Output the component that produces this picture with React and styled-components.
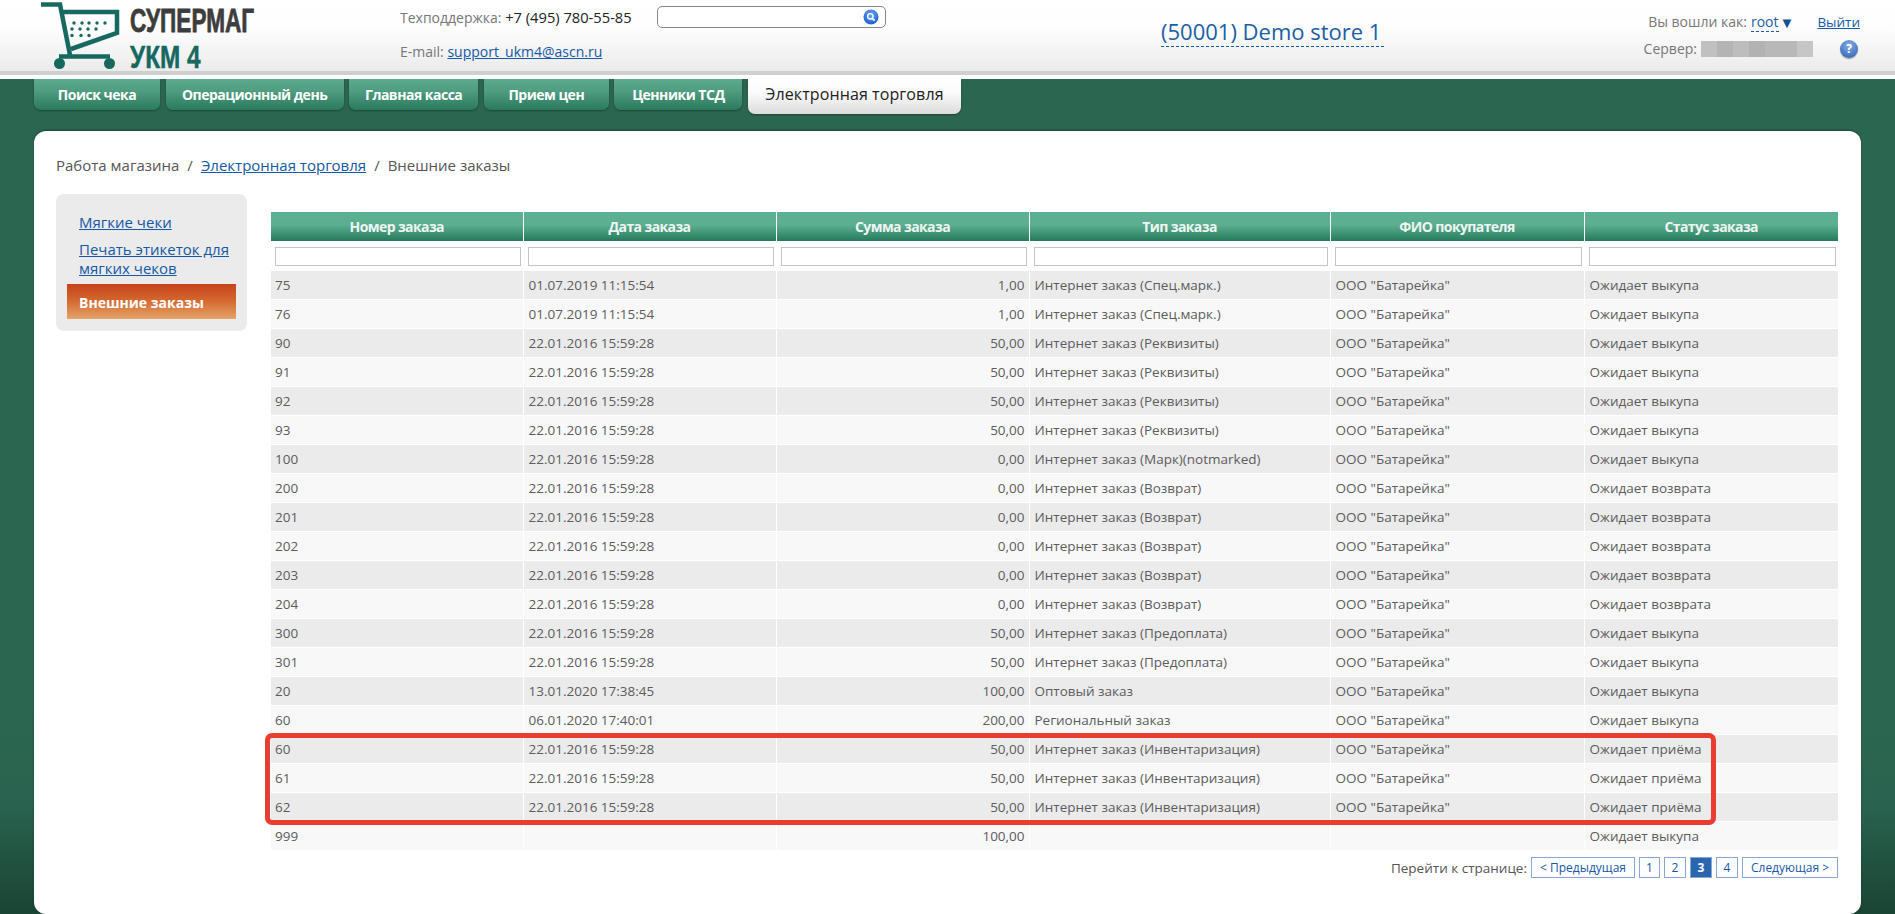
import React from "react";
import styled, { createGlobalStyle } from "styled-components";

const Global = createGlobalStyle`
  html, body { margin: 0; padding: 0; height: 100%; overflow: hidden; }
  body { font-family: "Open Sans", "Noto Sans", sans-serif; color: #555; }
  #root { height: 100%; }
`;
const Page = styled.div`
  height: 914px;
  display: flex;
  flex-direction: column;
  background: linear-gradient(to bottom, #2b6650 0, #2b6650 710px, #2a6450 800px, #1a4434 914px);
`;
const Header = styled.header`
  height: 71px;
  flex: none;
  display: flex;
  background: linear-gradient(to bottom, #ffffff 0, #fdfdfd 30px, #ebebeb 100%);
  border-bottom: 4px solid #cfcfcf;
  box-shadow: 0 4px 0 #fff;
  margin-bottom: 4px;
`;
const Logo = styled.div`
  width: 360px;
  margin-left: 40px;
  display: flex;
  flex: none;
`;
const LogoText = styled.div`
  width: 130px;
  padding-top: 8px;
  display: flex;
  flex-direction: column;
`;
const LogoTop = styled.div`
  font-family: "Liberation Sans", sans-serif;
  font-weight: 700;
  font-size: 33px;
  line-height: 26px;
  height: 26px;
  color: #3d3d3d;
  transform: scaleX(0.685);
  transform-origin: 0 50%;
  white-space: nowrap;
  -webkit-text-stroke: 0.8px #3d3d3d;
  width: 122px;
`;
const LogoBottom = styled.div`
  font-family: "Liberation Sans", sans-serif;
  font-weight: 700;
  font-size: 32px;
  line-height: 26px;
  height: 26px;
  margin-top: 10px;
  color: #17695f;
  transform: scaleX(0.76);
  transform-origin: 0 50%;
  white-space: nowrap;
  -webkit-text-stroke: 0.5px #17695f;
  width: 70px;
`;
const Contacts = styled.div`
  width: 257px;
  flex: none;
  padding-top: 7px;
  font-size: 14px;
  line-height: 20px;
  color: #777;
`;
const ContactLine = styled.div`
  height: 35px;
  white-space: nowrap;
`;
const Phone = styled.span`
  color: #222;
  font-size: 14.7px;
`;
const A = styled.a`
  color: #1458a6;
  text-decoration: underline;
  cursor: pointer;
`;
const Search = styled.div`
  width: 229px;
  height: 22px;
  box-sizing: border-box;
  margin-top: 6px;
  flex: none;
  border: 1px solid #888;
  border-radius: 5px;
  background: #fff;
  display: flex;
  align-items: center;
  justify-content: flex-end;
  padding-right: 6px;
`;
const Store = styled.div`
  margin-left: 275px;
  width: 223px;
  flex: none;
  height: 31px;
  margin-top: 16px;
  box-sizing: border-box;
  border-bottom: 1px dashed #1458a6;
  font-size: 22px;
  line-height: 31px;
  color: #1a5fa5;
  white-space: nowrap;
`;
const User = styled.div`
  flex: 1;
  padding: 12px 35px 0 0;
  font-size: 14px;
  line-height: 20px;
  color: #777;
`;
const UserRow = styled.div`
  display: flex;
  justify-content: flex-end;
  align-items: center;
  height: 20px;
  white-space: nowrap;
`;
const UserLink = styled.span`
  color: #1a5fa5;
  margin-left: 4px;
  border-bottom: 1px dashed #1458a6;
  line-height: 19px;
`;
const Caret = styled.span`
  color: #134f93;
  font-size: 15px;
  margin-left: 1px;
`;
const Logout = styled(A)`
  margin-left: 23px;
  font-size: 13.5px;
`;
const ServerRow = styled.div`
  margin-top: 7px;
  height: 20px;
  display: flex;
  justify-content: flex-end;
  align-items: center;
  white-space: nowrap;
`;
const Blur = styled.div`
  width: 112px;
  height: 16px;
  margin-left: 4px;
  margin-right: 27px;
  background: linear-gradient(to right,
    #c0c0c0 0 16px, #b4b4b4 16px 32px, #bdbdbd 32px 48px, #b2b2b2 48px 64px,
    #b8b8b8 64px 80px, #b8b8b8 80px 96px, #c6c6c6 96px 112px);
`;
const Help = styled.div`
  width: 18px;
  height: 18px;
  margin-right: 2px;
  border-radius: 50%;
  background: radial-gradient(circle at 50% 30%, #86aee6, #3f71bd 75%);
  box-shadow: 0 1px 1px rgba(0, 0, 0, 0.4);
  color: #fff;
  font-size: 12px;
  font-weight: 700;
  line-height: 18px;
  text-align: center;
`;
const Tabs = styled.nav`
  height: 52px;
  flex: none;
  padding-left: 34px;
  display: flex;
  align-items: flex-start;
  gap: 5.6px;
`;
const Tab = styled.div`
  width: ${(p) => p.$w}px;
  height: ${(p) => (p.$active ? 35 : 31)}px;
  box-sizing: border-box;
  border-radius: 0 0 7px 7px;
  font-size: ${(p) => (p.$active ? 16 : 14)}px;
  font-weight: ${(p) => (p.$active ? 400 : 700)};
  letter-spacing: ${(p) => (p.$active ? "0.1px" : "-0.5px")};
  line-height: 31px;
  text-align: center;
  white-space: nowrap;
  color: ${(p) => (p.$active ? "#222" : "#fff")};
  background: ${(p) =>
    p.$active
      ? "linear-gradient(to bottom, #ffffff 0, #fafafa 40%, #dcdcdc 100%)"
      : "linear-gradient(to bottom, #5cab8e 0, #4f9c80 40%, #2a7a5e 100%)"};
  box-shadow: 0 1px 2px rgba(0, 0, 0, 0.35);
`;
const Card = styled.main`
  flex: 1;
  margin: 0 34px;
  padding: 24px 23px 0 22px;
  background: #fff;
  border-radius: 12px;
  box-shadow: 0 -1px 2px rgba(0, 0, 0, 0.35);
  min-height: 0;
`;
const Crumbs = styled.div`
  height: 20px;
  font-size: 15px;
  line-height: 20px;
  color: #555;
  white-space: nowrap;
`;
const Sep = styled.span`
  margin: 0 8px;
`;
const Body = styled.div`
  margin-top: 19px;
  display: flex;
  align-items: flex-start;
  gap: 24px;
`;
const Side = styled.aside`
  width: 191px;
  flex: none;
  box-sizing: border-box;
  padding: 19px 11px 12px;
  background: #ebebeb;
  border-radius: 8px;
  font-size: 15px;
  line-height: 19px;
`;
const SideLink = styled.a`
  display: block;
  margin: 0 0 8px 12px;
  color: #1458a6;
  text-decoration: underline;
  cursor: pointer;
`;
const SideActive = styled.div`
  height: 35px;
  margin-top: -2px;
  padding-left: 12px;
  font-weight: 700;
  font-size: 14px;
  line-height: 38px;
  color: #fff;
  background: linear-gradient(to bottom, #c6431b 0, #d3662e 45%, #e4a468 100%);
`;
const Main = styled.div`
  flex: 1;
  margin-top: 18px;
  position: relative;
`;
const Table = styled.table`
  width: 1567px;
  table-layout: fixed;
  border-collapse: collapse;
  font-size: 13.5px;
`;
const Th = styled.th`
  height: 29px;
  padding: 0;
  font-size: 14px;
  font-weight: 700;
  letter-spacing: -0.6px;
  color: #eef5f2;
  text-align: center;
  border-left: 1px solid #fff;
  background: linear-gradient(to bottom, #5eb092 0, #5cae90 45%, #257a5c 100%);
  &:first-child { border-left: 0; }
`;
const FilterCell = styled.td`
  height: 30px;
  padding: 0 2px 0 5px;
  background: #fff;
  &:first-child { padding-left: 4px; }
`;
const FilterInput = styled.input`
  display: block;
  width: 100%;
  height: 19px;
  box-sizing: border-box;
  margin: 1px 0 0;
  padding: 0;
  border: 1px solid #c4c4c4;
  background: #fff;
  outline: none;
`;
const Row = styled.tr`
  background: ${(p) => (p.$odd ? "#ebebeb" : "#f8f8f8")};
`;
const Td = styled.td`
  height: 28px;
  padding: 0 4px 0 5px;
  color: #5c5c5c;
  text-align: ${(p) => (p.$right ? "right" : "left")};
  white-space: nowrap;
  border-left: 1px solid #fff;
  border-bottom: 1px solid #fff;
  &:first-child { border-left: 0; padding-left: 4px; }
`;
const Highlight = styled.div`
  position: absolute;
  left: -6px;
  top: 521px;
  width: 1451px;
  height: 92px;
  box-sizing: border-box;
  border: 5px solid #e93d32;
  border-radius: 7px;
  pointer-events: none;
`;
const Pager = styled.div`
  margin-top: 6px;
  display: flex;
  justify-content: flex-end;
  align-items: center;
  gap: 4px;
  font-size: 13.5px;
  color: #555;
  white-space: nowrap;
`;
const PageBtn = styled.span`
  width: ${(p) => p.$w}px;
  height: 21px;
  box-sizing: border-box;
  border: 1px solid #8aa6d6;
  font-size: 12px;
  line-height: 19px;
  text-align: center;
  font-weight: ${(p) => (p.$current ? 700 : 400)};
  color: ${(p) => (p.$current ? "#fff" : "#1458a6")};
  background: ${(p) => (p.$current ? "#2a65b0" : "#fff")};
`;

const CartIcon = () => (
  <svg width="90" height="72" viewBox="0 0 90 72" style={{ flex: "none" }}>
    <g fill="none" stroke="#17695f" strokeWidth="4.5">
      <path d="M1 4.5H20L30 55" />
      <path d="M22 12H77V33L31 49" />
      <path d="M19 56.5H70" />
    </g>
    <circle cx="19.5" cy="63.5" r="5.5" fill="#17695f" />
    <circle cx="69.5" cy="63.5" r="5.5" fill="#17695f" />
    <g fill="#17695f">
      {[[34, 23], [42, 23], [49, 23], [57, 23], [65, 23], [32, 29], [40, 29], [48, 29], [56, 29], [32, 35.5], [41, 35.5], [49, 35.5]].map(([x, y]) => (
        <circle key={`${x}-${y}`} cx={x} cy={y} r="1.7" />
      ))}
    </g>
  </svg>
);
const SearchIcon = () => (
  <svg width="16" height="16" viewBox="0 0 16 16">
    <defs>
      <radialGradient id="sg" cx="50%" cy="35%" r="65%">
        <stop offset="0" stopColor="#6fa6f5" />
        <stop offset="1" stopColor="#1a5fd8" />
      </radialGradient>
    </defs>
    <circle cx="8" cy="8" r="7.5" fill="url(#sg)" />
    <circle cx="7.3" cy="7.3" r="2.7" fill="none" stroke="#fff" strokeWidth="1.4" />
    <path d="M9.3 9.3L11.6 11.6" stroke="#fff" strokeWidth="1.7" />
  </svg>
);

const I = "Интернет заказ";
const B = 'ООО "Батарейка"';
const W = "Ожидает выкупа";
const V = "Ожидает возврата";
const P = "Ожидает приёма";
const D = "22.01.2016 15:59:28";
const rows = [
  ["75", "01.07.2019 11:15:54", "1,00", `${I} (Спец.марк.)`, B, W],
  ["76", "01.07.2019 11:15:54", "1,00", `${I} (Спец.марк.)`, B, W],
  ["90", D, "50,00", `${I} (Реквизиты)`, B, W],
  ["91", D, "50,00", `${I} (Реквизиты)`, B, W],
  ["92", D, "50,00", `${I} (Реквизиты)`, B, W],
  ["93", D, "50,00", `${I} (Реквизиты)`, B, W],
  ["100", D, "0,00", `${I} (Марк)(notmarked)`, B, W],
  ["200", D, "0,00", `${I} (Возврат)`, B, V],
  ["201", D, "0,00", `${I} (Возврат)`, B, V],
  ["202", D, "0,00", `${I} (Возврат)`, B, V],
  ["203", D, "0,00", `${I} (Возврат)`, B, V],
  ["204", D, "0,00", `${I} (Возврат)`, B, V],
  ["300", D, "50,00", `${I} (Предоплата)`, B, W],
  ["301", D, "50,00", `${I} (Предоплата)`, B, W],
  ["20", "13.01.2020 17:38:45", "100,00", "Оптовый заказ", B, W],
  ["60", "06.01.2020 17:40:01", "200,00", "Региональный заказ", B, W],
  ["60", D, "50,00", `${I} (Инвентаризация)`, B, P],
  ["61", D, "50,00", `${I} (Инвентаризация)`, B, P],
  ["62", D, "50,00", `${I} (Инвентаризация)`, B, P],
  ["999", "", "100,00", "", "", W],
];
const cols = [
  ["Номер заказа", 252],
  ["Дата заказа", 253],
  ["Сумма заказа", 253],
  ["Тип заказа", 301],
  ["ФИО покупателя", 254],
  ["Статус заказа", 254],
];
const tabs = [
  ["Поиск чека", 126],
  ["Операционный день", 178],
  ["Главная касса", 129],
  ["Прием цен", 125],
  ["Ценники ТСД", 128],
  ["Электронная торговля", 213, true],
];

export default function App() {
  return (
    <Page>
      <Global />
      <Header>
        <Logo>
          <CartIcon />
          <LogoText>
            <LogoTop>СУПЕРМАГ</LogoTop>
            <LogoBottom>УКМ 4</LogoBottom>
          </LogoText>
        </Logo>
        <Contacts>
          <ContactLine>
            Техподдержка: <Phone>+7 (495) 780-55-85</Phone>
          </ContactLine>
          <ContactLine>
            E-mail: <A>support_ukm4@ascn.ru</A>
          </ContactLine>
        </Contacts>
        <Search>
          <SearchIcon />
        </Search>
        <Store>(50001) Demo store 1</Store>
        <User>
          <UserRow>
            Вы вошли как: <UserLink>root</UserLink>
            <Caret>▼</Caret>
            <Logout>Выйти</Logout>
          </UserRow>
          <ServerRow>
            Сервер:
            <Blur />
            <Help>?</Help>
          </ServerRow>
        </User>
      </Header>
      <Tabs>
        {tabs.map(([t, w, a]) => (
          <Tab key={t} $w={w} $active={a}>
            {t}
          </Tab>
        ))}
      </Tabs>
      <Card>
        <Crumbs>
          Работа магазина<Sep>/</Sep>
          <A>Электронная торговля</A>
          <Sep>/</Sep>Внешние заказы
        </Crumbs>
        <Body>
          <Side>
            <SideLink>Мягкие чеки</SideLink>
            <SideLink>Печать этикеток для мягких чеков</SideLink>
            <SideActive>Внешние заказы</SideActive>
          </Side>
          <Main>
            <Table>
              <colgroup>
                {cols.map(([t, w]) => (
                  <col key={t} width={w} />
                ))}
              </colgroup>
              <thead>
                <tr>
                  {cols.map(([t]) => (
                    <Th key={t}>{t}</Th>
                  ))}
                </tr>
                <tr>
                  {cols.map(([t]) => (
                    <FilterCell key={t}>
                      <FilterInput />
                    </FilterCell>
                  ))}
                </tr>
              </thead>
              <tbody>
                {rows.map((r, i) => (
                  <Row key={i} $odd={i % 2 === 0}>
                    {r.map((c, j) => (
                      <Td key={j} $right={j === 2}>
                        {c}
                      </Td>
                    ))}
                  </Row>
                ))}
              </tbody>
            </Table>
            <Highlight />
            <Pager>
              Перейти к странице:
              <PageBtn $w={104}>&lt; Предыдущая</PageBtn>
              <PageBtn $w={21}>1</PageBtn>
              <PageBtn $w={22}>2</PageBtn>
              <PageBtn $w={22} $current>3</PageBtn>
              <PageBtn $w={22}>4</PageBtn>
              <PageBtn $w={96}>Следующая &gt;</PageBtn>
            </Pager>
          </Main>
        </Body>
      </Card>
    </Page>
  );
}
